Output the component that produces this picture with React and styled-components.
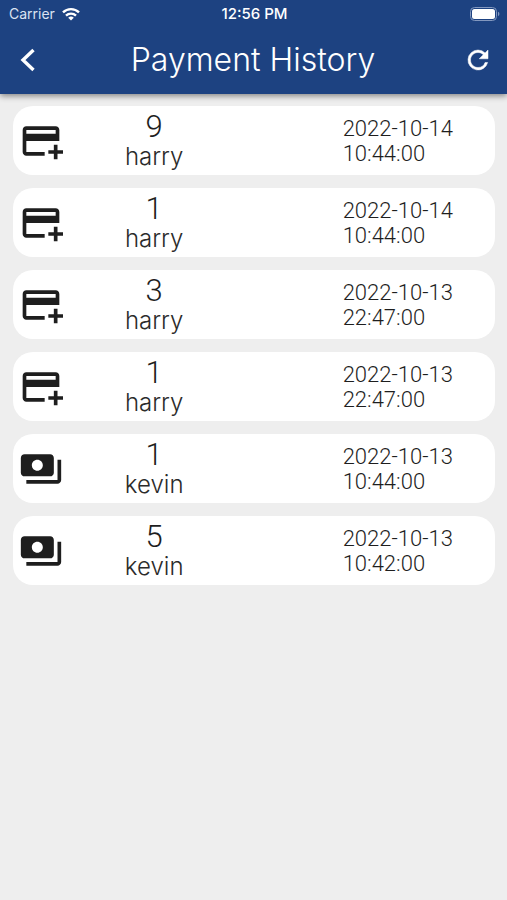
import React from "react";
import styled, { createGlobalStyle } from "styled-components";
import { MdAddCard, MdPayments } from "react-icons/md";

const GlobalStyle = createGlobalStyle`
  * {
    box-sizing: border-box;
  }

  body {
    margin: 0;
    background-color: #eeeeee;
    color: #1e1e1e;
    font-family: Inter, sans-serif;
  }
`;

const Page = styled.div`
  min-height: 100vh;
`;

const Header = styled.header`
  background-color: #1d4281;
  color: #fff;
  box-shadow: 0 2px 6px rgba(0, 0, 0, 0.45);
`;

const StatusBar = styled.div`
  display: grid;
  grid-template-columns: 1fr auto 1fr;
  align-items: center;
  height: 27px;
  padding: 0 7px 0 9px;
  font-size: 14px;
  line-height: 16px;
`;

const Carrier = styled.div`
  display: flex;
  align-items: center;
  gap: 7px;
  color: #dbe3f2;
`;

const Clock = styled.div`
  font-size: 15px;
  font-weight: 500;
`;

const BatteryIcon = styled.svg`
  justify-self: end;
`;

const TitleBar = styled.div`
  display: flex;
  align-items: center;
  justify-content: space-between;
  height: 67px;
  padding: 0 14px 2px 13px;
`;

const Title = styled.h1`
  margin: 0;
  font-size: 32px;
  font-weight: 300;
  line-height: 38px;
`;

const IconButton = styled.button`
  display: flex;
  align-items: center;
  justify-content: center;
  width: 30px;
  height: 40px;
  padding: 0;
  border: none;
  background: none;
  color: inherit;
  cursor: pointer;
`;

const List = styled.ul`
  display: flex;
  flex-direction: column;
  gap: 13px;
  margin: 0;
  padding: 12px 12px 12px 13px;
  list-style: none;
`;

const Card = styled.li`
  display: grid;
  grid-template-columns: 56px 10fr 6fr 9fr;
  align-items: center;
  height: 69px;
  border-radius: 20px;
  background-color: #fff;
`;

const TypeIcon = styled.div`
  display: flex;
  justify-content: center;
`;

const Payment = styled.div`
  text-align: center;
`;

const Amount = styled.div`
  font-family: Roboto, sans-serif;
  font-size: 31px;
  font-weight: 300;
  line-height: 32px;
`;

const Name = styled.div`
  color: #2b2b2b;
  font-size: 24px;
  font-weight: 300;
  line-height: 28px;
`;

const DateTime = styled.time`
  grid-column: 4;
  padding-left: 1px;
  font-family: Roboto, sans-serif;
  font-size: 22px;
  font-weight: 300;
  line-height: 25px;
`;

const payments = [
  { id: 1, type: "card", amount: 9, name: "harry", date: "2022-10-14", time: "10:44:00" },
  { id: 2, type: "card", amount: 1, name: "harry", date: "2022-10-14", time: "10:44:00" },
  { id: 3, type: "card", amount: 3, name: "harry", date: "2022-10-13", time: "22:47:00" },
  { id: 4, type: "card", amount: 1, name: "harry", date: "2022-10-13", time: "22:47:00" },
  { id: 5, type: "cash", amount: 1, name: "kevin", date: "2022-10-13", time: "10:44:00" },
  { id: 6, type: "cash", amount: 5, name: "kevin", date: "2022-10-13", time: "10:42:00" },
];

function Wifi() {
  return (
    <svg width="18" height="14" viewBox="0 0 18 14" aria-hidden="true">
      <g fill="none" stroke="#fff" strokeWidth="2.4">
        <path d="M1 5.4a11.4 11.4 0 0 1 16 0" />
        <path d="M4 8.6a7.2 7.2 0 0 1 10 0" />
      </g>
      <path d="M6.2 10.8a4 4 0 0 1 5.6 0L9 13.6z" fill="#fff" />
    </svg>
  );
}

function Battery() {
  return (
    <BatteryIcon width="30" height="14" viewBox="0 0 30 14" role="img" aria-label="Battery">
      <rect x="0.5" y="0.5" width="26" height="13" rx="4" fill="none" stroke="#8398bf" />
      <rect x="2" y="2" width="23" height="10" rx="2.5" fill="#fff" />
      <path d="M28 4.8a2.4 2.4 0 0 1 0 4.4z" fill="#8398bf" />
    </BatteryIcon>
  );
}

function BackArrow() {
  return (
    <svg width="28" height="28" viewBox="0 0 28 28" aria-hidden="true">
      <path d="M19.5 4 9 14l10.5 10" fill="none" stroke="currentColor" strokeWidth="3.4" />
    </svg>
  );
}

function Refresh() {
  return (
    <svg width="30" height="30" viewBox="0 0 24 24" aria-hidden="true">
      <path
        d="M17.65 6.35A7.958 7.958 0 0 0 12 4a8 8 0 1 0 7.73 10h-2.08A5.99 5.99 0 0 1 12 18c-3.31 0-6-2.69-6-6s2.69-6 6-6c1.66 0 3.14.69 4.22 1.78L13 11h7V4z"
        fill="currentColor"
        stroke="currentColor"
        strokeWidth="0.4"
      />
    </svg>
  );
}

export default function App() {
  return (
    <Page>
      <GlobalStyle />
      <Header>
        <StatusBar>
          <Carrier>
            Carrier
            <Wifi />
          </Carrier>
          <Clock>12:56 PM</Clock>
          <Battery />
        </StatusBar>
        <TitleBar>
          <IconButton type="button" aria-label="Back">
            <BackArrow />
          </IconButton>
          <Title>Payment History</Title>
          <IconButton type="button" aria-label="Refresh">
            <Refresh />
          </IconButton>
        </TitleBar>
      </Header>

      <List>
        {payments.map((payment) => (
          <Card key={payment.id}>
            <TypeIcon>
              {payment.type === "card" ? <MdAddCard size={44} /> : <MdPayments size={44} />}
            </TypeIcon>
            <Payment>
              <Amount>{payment.amount}</Amount>
              <Name>{payment.name}</Name>
            </Payment>
            <DateTime dateTime={`${payment.date}T${payment.time}`}>
              {payment.date}
              <br />
              {payment.time}
            </DateTime>
          </Card>
        ))}
      </List>
    </Page>
  );
}
